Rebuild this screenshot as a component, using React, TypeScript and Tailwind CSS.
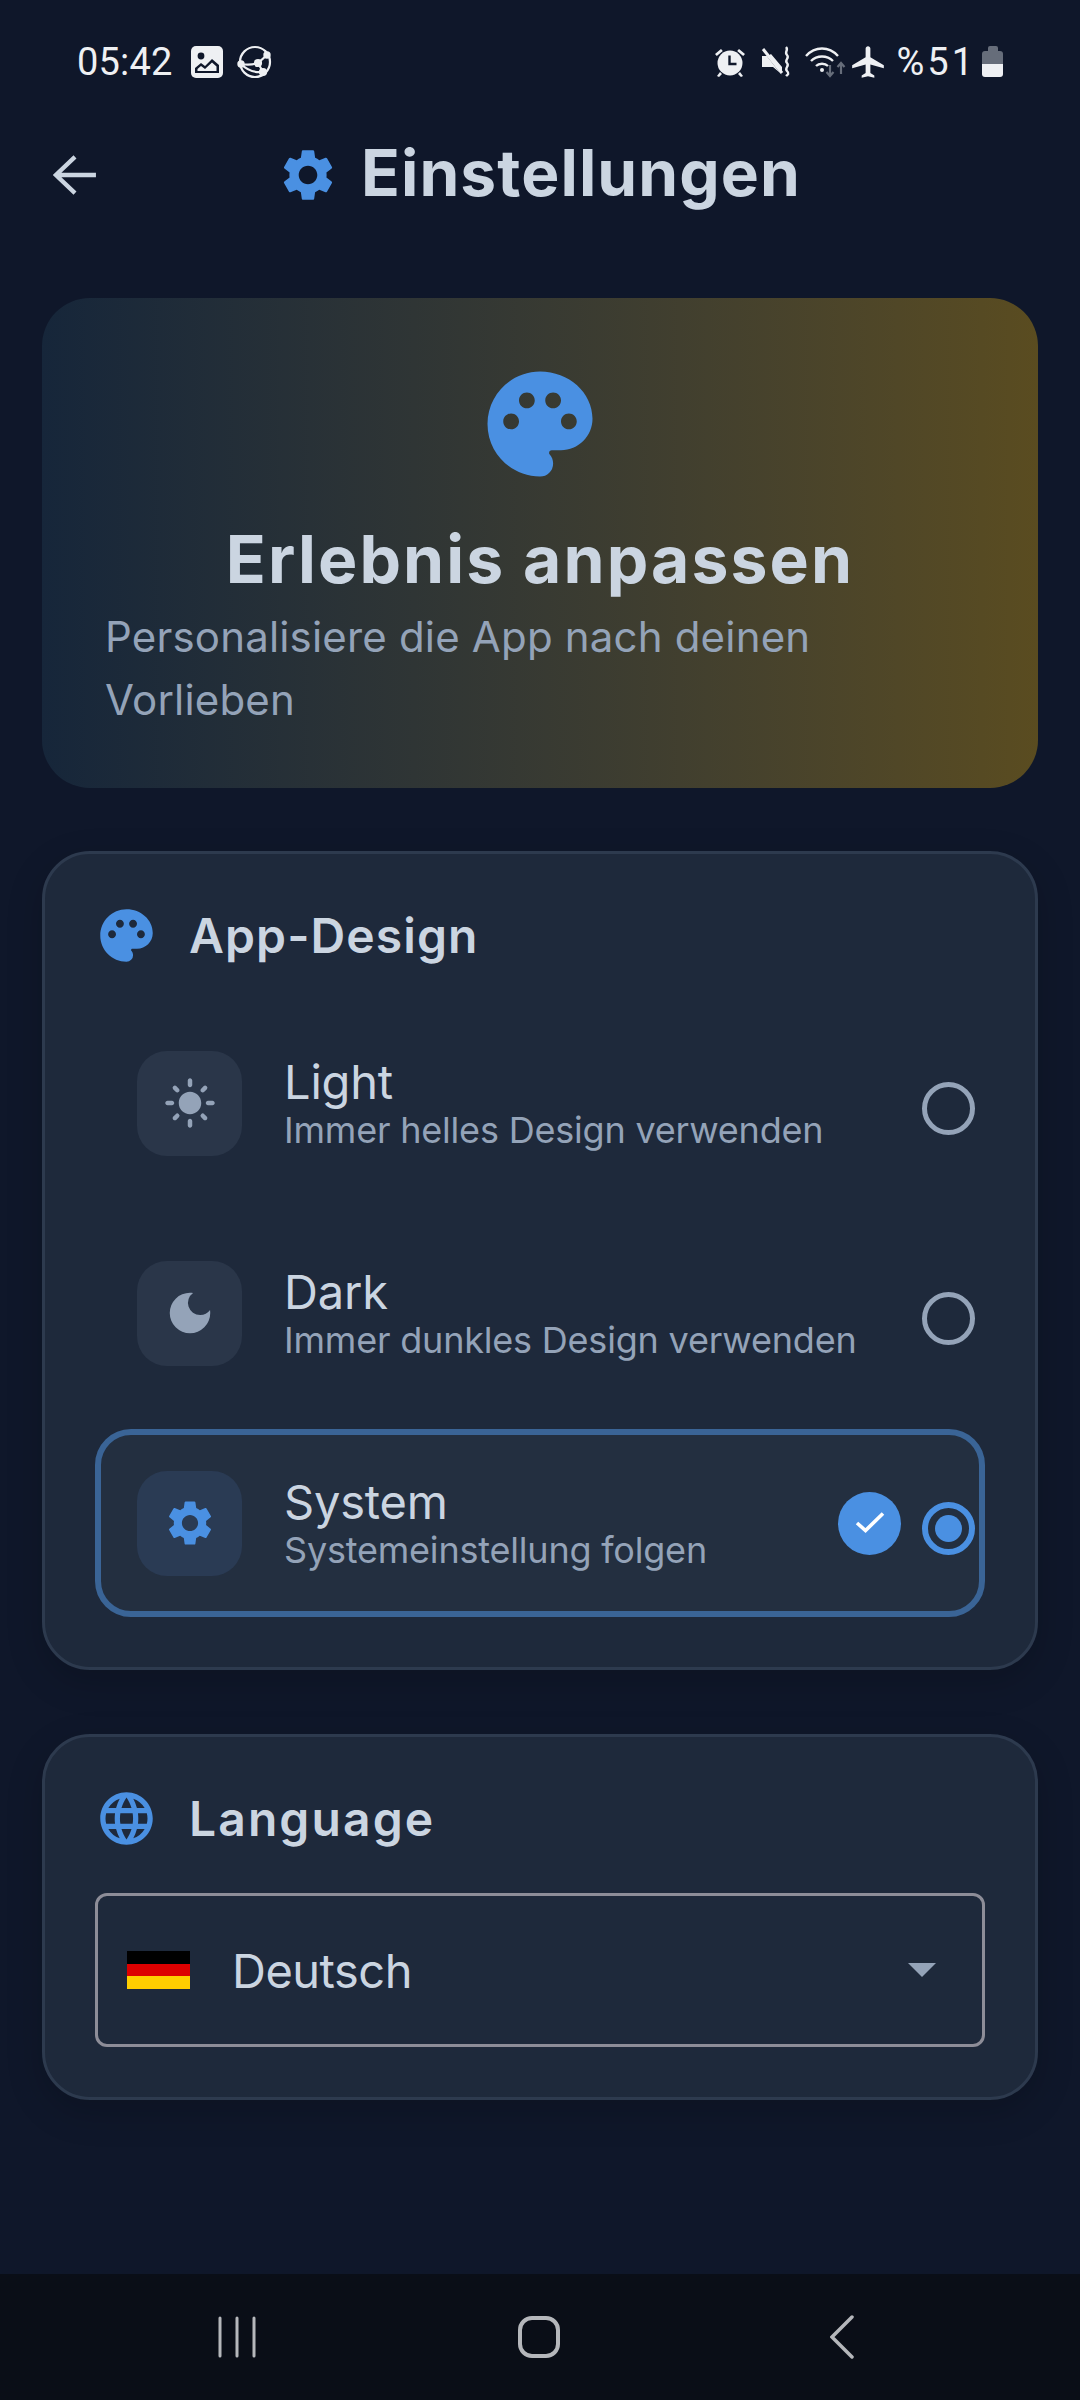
import React from "react";
import { MdSettings, MdPalette, MdLanguage, MdLightMode, MdDarkMode, MdAirplanemodeActive } from "react-icons/md";

const head = { fontFamily: '"Inter","Noto Sans",sans-serif' };

function Status() {
  return (
    <div className="flex h-[117px] items-center justify-between pl-[77px] pr-[77px] pt-[6px] text-[#eef0f3]">
      <div className="flex items-center">
        <span className="text-[38px] leading-none tracking-[0.2px]" style={{ fontFamily: "Roboto, sans-serif" }}>05:42</span>
        <svg className="ml-[18px]" width="32" height="32" viewBox="0 0 32 32">
          <rect width="32" height="32" rx="5" fill="#eef0f3" />
          <circle cx="10" cy="10" r="3.4" fill="#0f172a" />
          <path d="M4 27v-5l6-5 4 3 7-7 7 6v8z" fill="#0f172a" />
          <path d="M6.5 25v-2l3.5-3 4 3 7-6.500 4.500 4v4.500z" fill="#eef0f3" />
        </svg>
        <svg className="ml-[14px]" width="36" height="34" viewBox="0 0 36 34" fill="none" stroke="#eef0f3" strokeWidth="2.2">
          <circle cx="18" cy="17" r="15" />
          <path d="M4 19c6 1 11 1 17-1l9-8M21 18l5 9M4 19c6 6 13 9 22 8" />
          <circle cx="21" cy="18" r="3" fill="#eef0f3" />
          <circle cx="26" cy="27" r="3" fill="#eef0f3" />
          <circle cx="4" cy="19" r="2.600" fill="#eef0f3" />
          <circle cx="30" cy="10" r="2.600" fill="#eef0f3" />
        </svg>
      </div>
      <div className="flex items-center">
        <svg width="32" height="32" viewBox="0 0 32 32" fill="#eef0f3">
          <circle cx="16" cy="17" r="12.500" />
          <path d="M1 8l6-5 1.800 2-6 5zM31 8l-6-5-1.800 2 6 5zM6 26l-3 4 2 1 3-3zM26 26l3 4-2 1-3-3z" />
          <path d="M15.500 9.500v8.500h7" stroke="#0f172a" strokeWidth="2.400" fill="none" />
        </svg>
        <svg className="ml-[15px]" width="30" height="32" viewBox="0 0 30 32" fill="#eef0f3">
          <path d="M1 10h6l3-2 11 13v7.500L12 21H1z" />
          <path d="M1 2l20 26" stroke="#0f172a" strokeWidth="2" />
          <path d="M2 3l19 24" stroke="#eef0f3" strokeWidth="3" />
          <path d="M25 1c3 3-2 5 1 8s-3 5 0 8-3 5 0 8 0 4-1 5" stroke="#eef0f3" strokeWidth="2.400" fill="none" />
        </svg>
        <svg className="ml-[13px]" width="42" height="34" viewBox="0 0 42 34" fill="none">
          <path d="M2 11C11 1 25 1 34 11M7 16c6-6 16-6 22 0M12 21c3-3 9-3 12 0" stroke="#eef0f3" strokeWidth="2.400" />
          <circle cx="18" cy="25" r="2" fill="#eef0f3" />
          <path d="M26 20v11m-3.500-4 3.500 4 3.500-4M37 29V18m-3.500 4 3.500-4 3.500 4" stroke="#666d7a" strokeWidth="2.200" />
        </svg>
        <MdAirplanemodeActive className="ml-[3px] text-[38px] text-[#eef0f3]" />
        <span className="ml-[9px] text-[38px] leading-none tracking-[3px]" style={{ fontFamily: "Roboto, sans-serif" }}>%51</span>
        <div className="ml-[6px] flex w-[21px] flex-col items-center">
          <div className="h-[5px] w-[10px] rounded-t-[2px] bg-[#666d7a]" />
          <div className="h-[13px] w-[21px] rounded-t-[3px] bg-[#666d7a]" />
          <div className="h-[13px] w-[21px] rounded-b-[3px] bg-[#eef0f3]" />
        </div>
      </div>
    </div>
  );
}

function Radio({ on }: { on?: boolean }) {
  return on ? (
    <div className="mt-[10px] flex h-[53px] w-[53px] items-center justify-center rounded-full border-[6px] border-[#4a90e2]">
      <div className="h-[27px] w-[27px] rounded-full bg-[#4a90e2]" />
    </div>
  ) : (
    <div className="mt-[10px] h-[53px] w-[53px] rounded-full border-[5px] border-[#94a3b8]" />
  );
}

function Row({ icon, title, sub, on }: { icon: React.ReactNode; title: string; sub: string; on?: boolean }) {
  return (
    <div
      className={
        "flex h-[188px] items-center rounded-[36px] border-[6px] pl-[36px] pr-[4px] " +
        (on ? "border-[#3a6496] bg-[#232f40]" : "border-transparent")
      }
    >
      <div className={"flex h-[105px] w-[105px] shrink-0 items-center justify-center rounded-[30px] " + (on ? "bg-[#2a3b54]" : "bg-[#2a3649]")}>
        {icon}
      </div>
      <div className="ml-[42px] flex-1 pt-[2px]">
        <div className="text-[47px] leading-[53px] tracking-[-0.2px] text-[#cbd5e1]">{title}</div>
        <div className="text-[36px] leading-[45px] tracking-[-0.2px] text-[#94a3b8]">{sub}</div>
      </div>
      {on && (
        <div className="mr-[21px] flex h-[63px] w-[63px] items-center justify-center rounded-full bg-[#4a90e2]">
          <svg width="32" height="24" viewBox="0 0 32 24" fill="none" stroke="#ffffff" strokeWidth="3.600">
            <path d="M3 12l8.500 7.500L29 2.500" />
          </svg>
        </div>
      )}
      <Radio on={on} />
    </div>
  );
}

function SectionHead({ icon, label, track }: { icon: React.ReactNode; label: string; track: string }) {
  return (
    <div className="flex items-center">
      <div className="flex h-[63px] w-[63px] items-center justify-center">{icon}</div>
      <span className={"ml-[31px] text-[48px] font-semibold leading-[63px] text-[#cbd5e1] " + track} style={head}>
        {label}
      </span>
    </div>
  );
}

export default function App() {
  return (
    <div className="flex h-[2400px] w-[1080px] flex-col bg-[#0f172a]" style={{ fontFamily: 'Inter, "Noto Sans", sans-serif' }}>
      <Status />
      <div className="flex h-[115px] items-center pl-[53px]">
        <svg width="44" height="40" viewBox="0 0 46 42" fill="none" stroke="#cbd5e1" strokeWidth="4.500">
          <path d="M23 2L3 21l20 19M3 21h42" />
        </svg>
        <MdSettings className="ml-[180px] text-[62px] text-[#4a90e2]" />
        <span className="mb-[4px] ml-[22px] text-[64px] font-bold leading-none tracking-[1.1px] text-[#cbd5e1]" style={head}>
          Einstellungen
        </span>
      </div>

      <main className="mt-[66px] flex flex-col gap-[63px] px-[42px]">
        <section className="flex h-[490px] flex-col rounded-[48px] bg-linear-to-r from-[#16263a] to-[#5a4c20] px-[63px] pt-[63px]">
          <MdPalette className="mx-auto text-[126px] text-[#4a90e2]" />
          <h1 className="mt-[33px] text-center text-[66px] font-bold leading-[78px] tracking-[2.1px] text-[#cbd5e1]" style={head}>
            Erlebnis anpassen
          </h1>
          <p className="mt-[7px] text-[42px] leading-[63px] tracking-[0.18px] text-[#94a3b8]">Personalisiere die App nach deinen Vorlieben</p>
        </section>

        <section className="rounded-[48px] border-[3px] border-[#2d3a4e] bg-[#1e293b] px-[50px] pb-[50px] pt-[50px] shadow-[0_12px_36px_rgba(0,0,0,0.18)]">
          <SectionHead icon={<MdPalette className="text-[63px] text-[#4a90e2]" />} label="App-Design" track="tracking-[1.1px]" />
          <div className="mt-[42px] flex flex-col gap-[22px]">
            <Row icon={<MdLightMode className="text-[54px] text-[#94a3b8]" />} title="Light" sub="Immer helles Design verwenden" />
            <Row icon={<MdDarkMode className="text-[54px] text-[#94a3b8]" />} title="Dark" sub="Immer dunkles Design verwenden" />
            <Row icon={<MdSettings className="text-[54px] text-[#4a90e2]" />} title="System" sub="Systemeinstellung folgen" on />
          </div>
        </section>

        <section className="mt-[1px] rounded-[48px] border-[3px] border-[#2d3a4e] bg-[#1e293b] px-[50px] pb-[50px] pt-[50px] shadow-[0_12px_36px_rgba(0,0,0,0.18)]">
          <SectionHead icon={<MdLanguage className="text-[63px] text-[#4a90e2]" />} label="Language" track="tracking-[2.1px]" />
          <div className="mt-[43px] flex h-[154px] items-center rounded-[12px] border-[3px] border-[#8d8d98] pl-[29px] pr-[46px]">
            <div className="flex h-[38px] w-[63px] flex-col">
              <div className="flex-1 bg-black" />
              <div className="flex-1 bg-[#dd0000]" />
              <div className="flex-1 bg-[#ffce00]" />
            </div>
            <span className="ml-[42px] flex-1 text-[47px] leading-none tracking-[-0.5px] text-[#cbd5e1]">Deutsch</span>
            <div className="h-0 w-0 border-x-[14px] border-t-[14px] border-x-transparent border-t-[#94a3b8]" />
          </div>
        </section>
      </main>

      <nav className="mt-auto flex h-[126px] items-center bg-[#0a0e17] pl-[218px]">
        <svg width="38" height="42" viewBox="0 0 38 42" fill="none" stroke="#b5b7bb" strokeWidth="3" strokeLinecap="round">
          <path d="M2 2v38M19 2v38M36 2v38" />
        </svg>
        <svg className="ml-[262px]" width="42" height="42" viewBox="0 0 42 42" fill="none" stroke="#b5b7bb" strokeWidth="4">
          <rect x="2" y="2" width="38" height="38" rx="12" />
        </svg>
        <svg className="ml-[270px]" width="24" height="44" viewBox="0 0 24 44" fill="none" stroke="#b5b7bb" strokeWidth="3.500" strokeLinecap="round">
          <path d="M22 2L2 22l20 20" />
        </svg>
      </nav>
    </div>
  );
}
